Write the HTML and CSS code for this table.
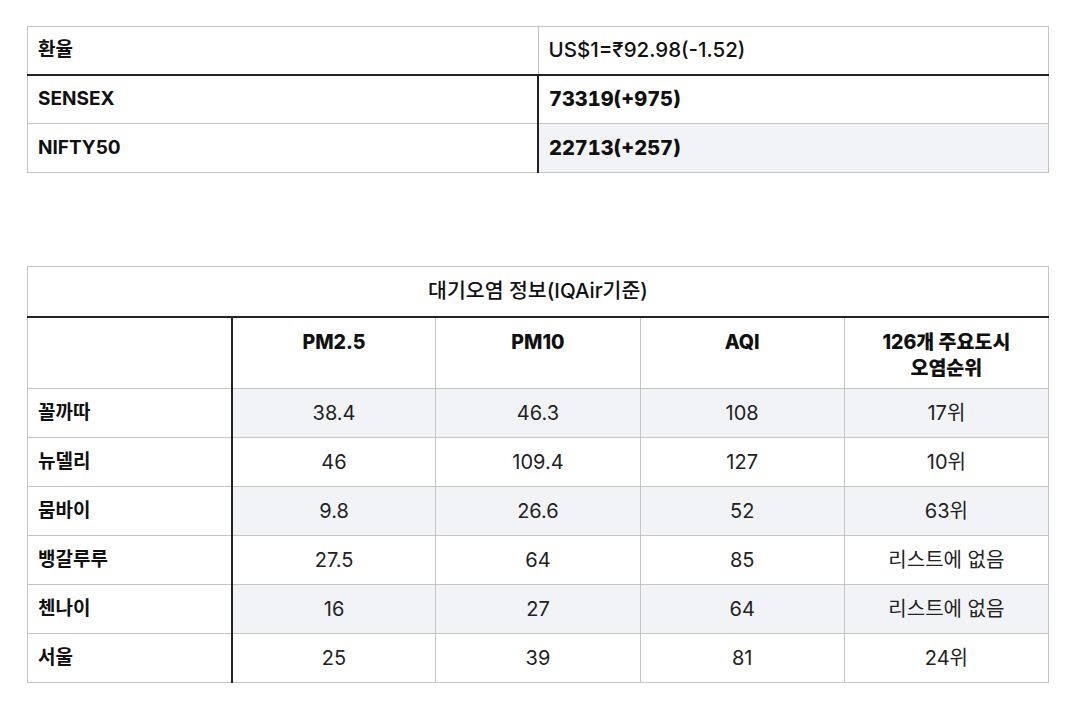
FILE: index.html
```html
<!DOCTYPE html>
<html lang="ko">
<head>
<meta charset="utf-8">
<link rel="stylesheet" href="styles.css">
</head>
<body>
<div class="page">
  <table class="market">
    <colgroup><col class="half"><col class="half"></colgroup>
    <tr class="head-row">
      <td class="label">환율</td>
      <td class="value value-medium">US$1=₹92.98(-1.52)</td>
    </tr>
    <tr class="body-row">
      <td class="label">SENSEX</td>
      <td class="value divider">73319(+975)</td>
    </tr>
    <tr class="body-row">
      <td class="label">NIFTY50</td>
      <td class="value divider shade">22713(+257)</td>
    </tr>
  </table>

  <table class="air">
    <colgroup><col><col><col><col><col></colgroup>
    <tr class="title-row">
      <td colspan="5" class="title">대기오염 정보(IQAir기준)</td>
    </tr>
    <tr class="col-head">
      <td class="city"></td>
      <td class="divider">PM2.5</td>
      <td>PM10</td>
      <td>AQI</td>
      <td>126개 주요도시<br>오염순위</td>
    </tr>
    <tr class="data shaded">
      <td class="city">꼴까따</td><td class="divider">38.4</td><td>46.3</td><td>108</td><td>17위</td>
    </tr>
    <tr class="data">
      <td class="city">뉴델리</td><td class="divider">46</td><td>109.4</td><td>127</td><td>10위</td>
    </tr>
    <tr class="data shaded">
      <td class="city">뭄바이</td><td class="divider">9.8</td><td>26.6</td><td>52</td><td>63위</td>
    </tr>
    <tr class="data">
      <td class="city">뱅갈루루</td><td class="divider">27.5</td><td>64</td><td>85</td><td>리스트에 없음</td>
    </tr>
    <tr class="data shaded">
      <td class="city">첸나이</td><td class="divider">16</td><td>27</td><td>64</td><td>리스트에 없음</td>
    </tr>
    <tr class="data">
      <td class="city">서울</td><td class="divider">25</td><td>39</td><td>81</td><td>24위</td>
    </tr>
  </table>
</div>
</body>
</html>
```
FILE: styles.css
```css
* { box-sizing: border-box; }
html, body { margin: 0; padding: 0; background: #fff; }
body {
  font-family: Inter, "Noto Sans CJK KR", sans-serif;
  color: #111;
  font-size: 19px;
}
.page {
  padding: 26px 0 0 27px;
  width: 1080px;
}
table {
  border-collapse: collapse;
  width: 1022px;
  table-layout: fixed;
}
td {
  border: 1px solid #c4c4c4;
  padding: 0 10px;
  line-height: 26px;
}

/* market table */
.market .half { width: 50%; }
.market .head-row td { height: 48px; border-bottom: 2px solid #222; }
.market .body-row td { height: 49px; }
.market .label { font-weight: 700; font-size: 19px; }
.market .value { font-weight: 800; font-size: 20px; font-variant-numeric: tabular-nums; }
.market .value-medium { font-weight: 500; font-size: 20.5px; font-variant-numeric: normal; }
.market .divider { border-left: 2px solid #222; }
.shade { background: #f2f3f7; }

/* air table */
.air { margin-top: 93px; }
.air td { text-align: center; }
.air .title-row td { height: 50px; border-bottom: 2px solid #222; font-weight: 500; font-size: 20.5px; text-align: center; }
.air .col-head td { height: 72px; vertical-align: top; padding-top: 11px; font-weight: 800; font-size: 19.5px; }
.air .data td { height: 49px; font-weight: 400; font-size: 20px; color: #222; }
.air .data td.city { text-align: left; font-weight: 700; font-size: 19px; color: #111; }
.air .divider { border-left: 2px solid #222; }
.air .data.shaded td:not(.city) { background: #f2f3f7; }
```
